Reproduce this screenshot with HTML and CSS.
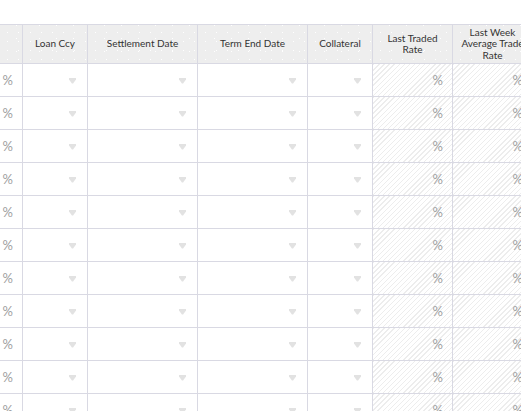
FILE: index.html
```html
<!DOCTYPE html>
<html>
<head>
<meta charset="utf-8">
<link rel="stylesheet" href="styles.css">
</head>
<body>
<div class="viewport">
  <div class="grid" id="grid">
    <div class="hcell"></div>
    <div class="hcell">Loan Ccy</div>
    <div class="hcell">Settlement Date</div>
    <div class="hcell">Term End Date</div>
    <div class="hcell">Collateral</div>
    <div class="hcell">Last Traded Rate</div>
    <div class="hcell">Last Week Average Trade Rate</div>
  </div>
</div>
<script src="app.js"></script>
</body>
</html>
```
FILE: app.js
```js
(function () {
  var grid = document.getElementById('grid');
  var arrow = '<svg class="arrow" width="7" height="6" viewBox="0 0 7 6"><path d="M0 0H7V1.4L4.1 5.6H2.9L0 1.4Z" fill="#e2e2e2"/></svg>';
  var html = '';
  for (var i = 0; i < 11; i++) {
    html += '<div class="cell pct">%</div>';
    html += '<div class="cell sel">' + arrow + '</div>';
    html += '<div class="cell sel">' + arrow + '</div>';
    html += '<div class="cell sel">' + arrow + '</div>';
    html += '<div class="cell sel">' + arrow + '</div>';
    html += '<div class="cell pct ro">%</div>';
    html += '<div class="cell pct ro">%</div>';
  }
  grid.insertAdjacentHTML('beforeend', html);
})();
```
FILE: styles.css
```css
html, body {
  margin: 0;
  padding: 0;
  overflow: hidden;
  background: #ffffff;
}
.viewport {
  width: 521px;
  height: 411px;
  overflow: hidden;
  padding-top: 24px;
  box-sizing: border-box;
}
.grid {
  display: grid;
  grid-template-columns: 23px 65px 110px 110px 65px 80px 80px;
  grid-auto-rows: 33px;
  grid-template-rows: 40px;
  width: 533px;
  font-family: Lato, "Liberation Sans", sans-serif;
}
.hcell {
  box-sizing: border-box;
  border-top: 1px solid #d9d9e3;
  border-bottom: 1px solid #d9d9e3;
  border-right: 1px solid #d9d9e3;
  background-color: #eeeeee;
  background-image:
    radial-gradient(circle, #ffffff 0.6px, transparent 0.9px),
    radial-gradient(circle, #ffffff 0.6px, transparent 0.9px);
  background-size: 11px 9px, 17px 13px;
  background-position: 2px 3px, 8px 7px;
  display: flex;
  align-items: center;
  justify-content: center;
  text-align: center;
  font-size: 10px;
  line-height: 11.5px;
  color: #333333;
  padding: 0 4px;
  white-space: normal;
}
.cell {
  box-sizing: border-box;
  border-bottom: 1px solid #d9d9e3;
  border-right: 1px solid #d9d9e3;
  display: flex;
  align-items: center;
  justify-content: flex-end;
}
.pct {
  font-size: 13px;
  color: #a0a0a0;
  padding-right: 9px;
}
.sel {
  padding-right: 11px;
}
.arrow {
  display: block;
  margin-top: 1px;
}
.ro {
  background-color: #fbfbfb;
  background-image: repeating-linear-gradient(-45deg, #ffffff 0 1.5px, #ededed 1.5px 2.5px, #ffffff 2.5px 3.6px);
}
```
